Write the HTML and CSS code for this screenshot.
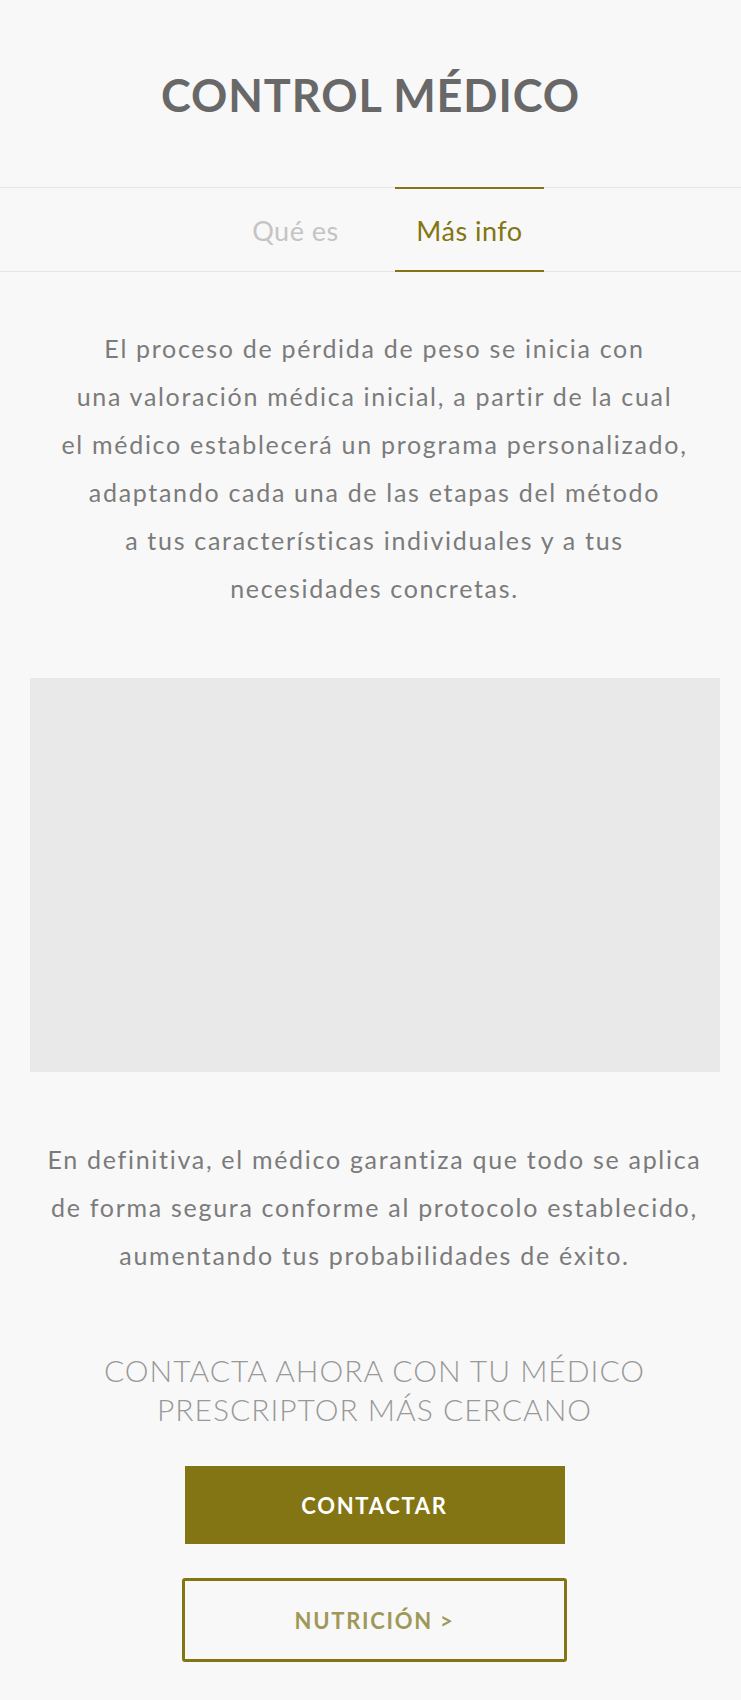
FILE: index.html
```html
<!DOCTYPE html>
<html lang="es">
<head>
<meta charset="utf-8">
<title>Control médico</title>
<link rel="stylesheet" href="styles.css">
</head>
<body>
<header class="hero">
  <h1 class="title">CONTROL MÉDICO</h1>
</header>
<nav class="tabs">
  <a class="tab">Qué es</a>
  <a class="tab tab-active">Más info</a>
</nav>
<main class="content">
  <p class="lead">El proceso de pérdida de peso se inicia con<br>una valoración médica inicial, a partir de la cual<br>el médico establecerá un programa personalizado,<br>adaptando cada una de las etapas del método<br>a tus características individuales y a tus<br>necesidades concretas.</p>
  <div class="media"></div>
  <p class="lead lead-second">En definitiva, el médico garantiza que todo se aplica<br>de forma segura conforme al protocolo establecido,<br>aumentando tus probabilidades de éxito.</p>
  <h2 class="cta-title">CONTACTA AHORA CON TU MÉDICO<br>PRESCRIPTOR MÁS CERCANO</h2>
  <div class="actions">
    <a class="btn btn-solid">CONTACTAR</a>
    <a class="btn btn-outline">NUTRICIÓN &gt;</a>
  </div>
</main>
</body>
</html>
```
FILE: styles.css
```css
html, body {
  margin: 0;
  padding: 0;
  background: #f8f8f8;
}
body {
  font-family: "Lato", "Liberation Sans", sans-serif;
  color: #7b7b7b;
}
.hero {
  height: 187px;
  box-sizing: border-box;
  padding-top: 68px;
  text-align: center;
}
.title {
  margin: 0;
  font-size: 45px;
  line-height: 54px;
  font-weight: 700;
  color: #686868;
  letter-spacing: 0.9px;
}
.tabs {
  display: flex;
  justify-content: center;
  gap: 25px;
  padding-left: 24px;
  border-top: 1px solid #e5e5e5;
  border-bottom: 1px solid #e5e5e5;
  height: 83px;
}
.tab {
  width: 149px;
  box-sizing: border-box;
  margin: -1px 0;
  border-top: 2px solid transparent;
  border-bottom: 2px solid transparent;
  display: flex;
  align-items: center;
  justify-content: center;
  font-size: 27px;
  letter-spacing: 0.5px;
  color: #c4c4c4;
  padding-top: 1px;
}
.tab-active {
  border-color: #837513;
  color: #837513;
}
.content {
  padding-left: 8px;
  display: flex;
  flex-direction: column;
  align-items: center;
}
.lead {
  margin: 52px 0 0;
  font-size: 25px;
  line-height: 48px;
  letter-spacing: 1.7px;
  text-align: center;
  color: #7b7b7b;
}
.media {
  align-self: flex-start;
  margin: 66px 0 0 22px;
  width: 690px;
  height: 394px;
  background: #e9e9e9;
}
.lead-second {
  margin-top: 63px;
}
.cta-title {
  margin: 72px 0 0;
  font-size: 30px;
  line-height: 39px;
  font-weight: 300;
  letter-spacing: 1px;
  color: #999;
  text-align: center;
}
.actions {
  margin-top: 37px;
  display: flex;
  flex-direction: column;
  align-items: center;
  gap: 34px;
}
.btn {
  display: flex;
  align-items: center;
  justify-content: center;
  box-sizing: border-box;
  font-size: 22px;
  font-weight: 700;
  letter-spacing: 1.7px;
}
.btn-solid {
  width: 380px;
  height: 78px;
  background: #837513;
  color: #fff;
}
.btn-outline {
  width: 385px;
  height: 84px;
  border: 3px solid #837513;
  border-radius: 3px;
  color: #a09858;
}
```
